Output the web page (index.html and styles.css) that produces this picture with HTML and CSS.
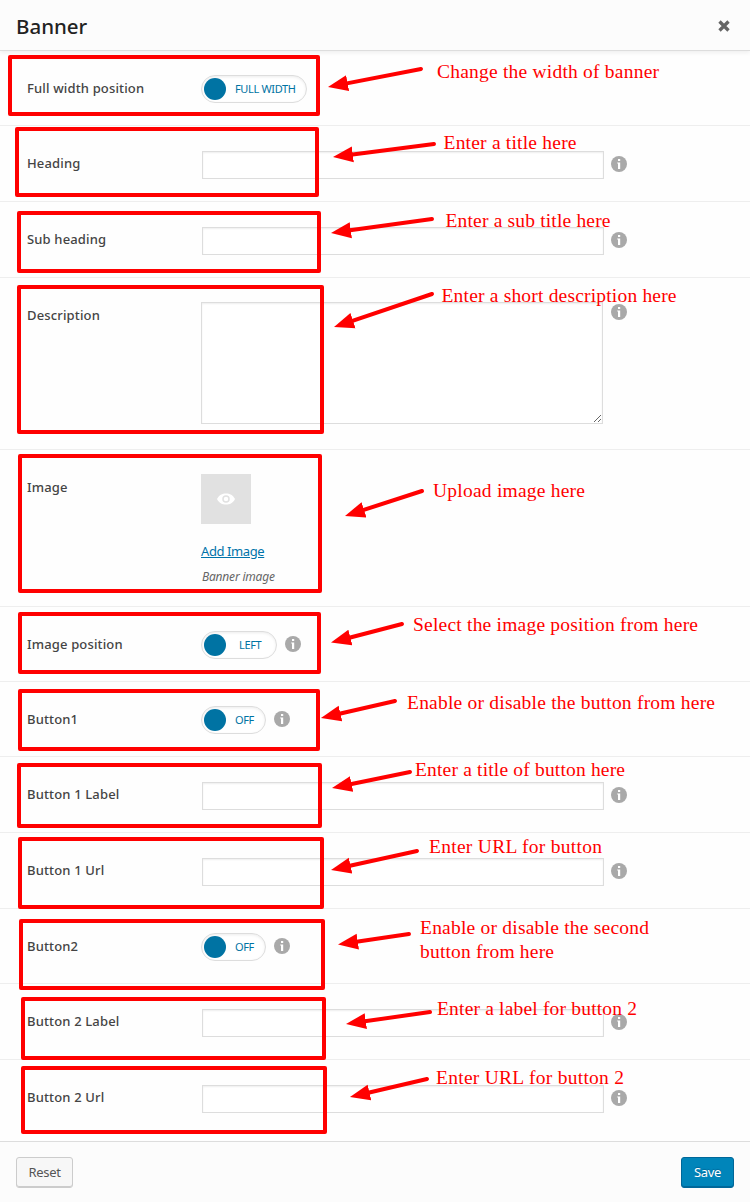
FILE: index.html
```html
<!DOCTYPE html>
<html lang="en">
<head>
<meta charset="utf-8">
<title>Banner</title>
<link rel="stylesheet" href="styles.css">
</head>
<body>
<svg class="defs" width="0" height="0">
  <symbol id="info" viewBox="0 0 16 16"><circle cx="8" cy="8" r="8" fill="#a9a9a9"/><path d="M7 3h2.200v2H7zM6.200 6.400h3V13H7V7.600h-.8z" fill="#fff"/></symbol>
</svg>
<main class="modal">
  <header class="header">
    <h1 class="title">Banner</h1>
    <svg class="close" viewBox="0 0 12 12"><path d="M1.500 1.500l9 9M10.500 1.500l-9 9" stroke="#666" stroke-width="3.300"/></svg>
  </header>
  <section class="rows">
    <div class="row"><span class="label">Full width position</span><div class="control"><span class="switch wide"><i class="knob"></i><span class="state">FULL WIDTH</span></span></div></div>
    <div class="row text"><span class="label">Heading</span><div class="control"><input class="field" type="text"><svg class="info"><use href="#info"/></svg></div></div>
    <div class="row text"><span class="label">Sub heading</span><div class="control"><input class="field" type="text"><svg class="info"><use href="#info"/></svg></div></div>
    <div class="row area"><span class="label">Description</span><div class="control"><textarea class="box"></textarea><svg class="info"><use href="#info"/></svg></div></div>
    <div class="row image"><span class="label">Image</span><div class="control upload">
      <div class="thumb"><svg class="eye" viewBox="0 0 18 12"><path d="M0 6C2 2 5.200.4 9 .4S16 2 18 6c-2 4-5.200 5.600-9 5.600S2 10 0 6z" fill="#fff"/><circle cx="9" cy="6" r="3" fill="none" stroke="#e1e1e1" stroke-width="1.500"/></svg></div>
      <a class="add">Add Image</a>
      <em class="hint">Banner image</em>
    </div></div>
    <div class="row"><span class="label">Image position</span><div class="control"><span class="switch mid"><i class="knob"></i><span class="state">LEFT</span></span><svg class="info"><use href="#info"/></svg></div></div>
    <div class="row"><span class="label">Button1</span><div class="control"><span class="switch"><i class="knob"></i><span class="state">OFF</span></span><svg class="info"><use href="#info"/></svg></div></div>
    <div class="row text"><span class="label">Button 1 Label</span><div class="control"><input class="field" type="text"><svg class="info"><use href="#info"/></svg></div></div>
    <div class="row text"><span class="label">Button 1 Url</span><div class="control"><input class="field" type="text"><svg class="info"><use href="#info"/></svg></div></div>
    <div class="row"><span class="label">Button2</span><div class="control"><span class="switch"><i class="knob"></i><span class="state">OFF</span></span><svg class="info"><use href="#info"/></svg></div></div>
    <div class="row text"><span class="label">Button 2 Label</span><div class="control"><input class="field" type="text"><svg class="info"><use href="#info"/></svg></div></div>
    <div class="row text last"><span class="label">Button 2 Url</span><div class="control"><input class="field" type="text"><svg class="info"><use href="#info"/></svg></div></div>
  </section>
  <footer class="footer">
    <button class="btn reset">Reset</button>
    <button class="btn save">Save</button>
  </footer>
  <svg class="notes" viewBox="0 0 750 1202">
    <defs><marker id="head" markerUnits="userSpaceOnUse" markerWidth="20" markerHeight="17" refX="10" refY="8.500" orient="auto"><path d="M0 .5L20 8.500 0 16.500z" fill="#f00"/></marker></defs>
    <g class="frames">
      <rect x="10" y="57" width="308" height="57"/>
      <rect x="17" y="129" width="300" height="66"/>
      <rect x="19" y="213" width="300" height="58"/>
      <rect x="19" y="287" width="303" height="145"/>
      <rect x="20" y="456" width="300" height="135"/>
      <rect x="20" y="614" width="299" height="58"/>
      <rect x="20" y="691" width="298" height="58"/>
      <rect x="19" y="765" width="301" height="61"/>
      <rect x="20" y="839" width="302" height="68"/>
      <rect x="21" y="921" width="302" height="67"/>
      <rect x="23" y="999" width="301" height="59"/>
      <rect x="23" y="1068" width="302" height="64"/>
    </g>
    <g class="arrows">
      <path d="M421 69L337.800 85.100"/>
      <path d="M434 144L342.900 155.700"/>
      <path d="M432 219L340.900 231.600"/>
      <path d="M432 294L343.500 323.800"/>
      <path d="M422 491L354.500 512.900"/>
      <path d="M402 624L340.700 640"/>
      <path d="M395 701L330.700 715.800"/>
      <path d="M410 772L341.800 786"/>
      <path d="M417 851L340.800 867.800"/>
      <path d="M409 934L347.900 943"/>
      <path d="M430 1012L355.900 1022.600"/>
      <path d="M427 1079L359.700 1094.700"/>
    </g>
    <g class="captions">
      <text x="437" y="78" textLength="222">Change the width of banner</text>
      <text x="443.500" y="149" textLength="133">Enter a title here</text>
      <text x="445.500" y="227" textLength="165">Enter a sub title here</text>
      <text x="441.500" y="302" textLength="235">Enter a short description here</text>
      <text x="433" y="497" textLength="152">Upload image here</text>
      <text x="413" y="631" textLength="285">Select the image position from here</text>
      <text x="407" y="709" textLength="308">Enable or disable the button from here</text>
      <text x="415" y="776" textLength="210">Enter a title of button here</text>
      <text x="429" y="853" textLength="173">Enter URL for button</text>
      <text x="420" y="934" textLength="229">Enable or disable the second</text>
      <text x="420" y="958" textLength="134">button from here</text>
      <text x="437" y="1015" textLength="200">Enter a label for button 2</text>
      <text x="436" y="1084" textLength="188">Enter URL for button 2</text>
    </g>
  </svg>
</main>
</body>
</html>
```

FILE: styles.css
```css
* { box-sizing: border-box; }
body { margin: 0; background: #fff; font: 13px/20px "Noto Sans", "Open Sans", sans-serif; color: #444; }
.defs { position: absolute; }
.modal { position: relative; width: 750px; height: 1202px; display: flex; flex-direction: column; background: #fefefe; }
.header { height: 51px; flex: none; display: flex; align-items: center; justify-content: space-between; padding: 2px 20px 0 16px; background: #fcfcfc; border-bottom: 1px solid #ddd; box-shadow: 0 2px 4px rgba(0,0,0,.06); }
.title { margin: 0; font-size: 20.500px; line-height: 30px; font-weight: 500; color: #222; }
.close { width: 12px; height: 12px; }
.rows { flex: none; }
.row { display: grid; grid-template-columns: 174px 1fr; height: 75px; padding: 24px 0 0 27px; border-bottom: 1px solid #eee; }
.text { height: 76px; }
.area { height: 172px; }
.image { height: 157px; }
.last { height: 81px; border-bottom: 0; }
.label { padding-top: 3px; font-weight: 500; font-size: 13px; letter-spacing: .15px; }
.control { display: flex; align-items: flex-start; gap: 8px; }
.field { width: 402px; height: 28px; margin: 1px -1px 0 1px; border: 1px solid #ddd; background: #fff; box-shadow: inset 0 1px 2px rgba(0,0,0,.07); }
.box { width: 402px; height: 122px; margin: 0; border: 1px solid #ddd; background: #fff; box-shadow: inset 0 1px 2px rgba(0,0,0,.07); resize: both; }
.info { width: 16px; height: 16px; flex: none; margin-top: 5px; }
.text .info { margin-top: 6px; }
.area .info { margin-top: 2px; }
.switch { display: flex; align-items: center; width: 65px; height: 28px; padding-left: 2px; border: 1px solid #ddd; border-radius: 14px; background: #fff; box-shadow: inset 0 1px 3px rgba(0,0,0,.08); }
.wide { width: 106px; }
.mid { width: 76px; }
.knob { width: 22px; height: 22px; flex: none; border-radius: 50%; background: #0073a3; }
.state { margin-left: 9px; font-size: 11px; line-height: 22px; letter-spacing: -.35px; color: #0073a3; white-space: nowrap; }
.mid .state { margin-left: 13px; }
.upload { flex-direction: column; gap: 0; }
.thumb { display: flex; align-items: center; justify-content: center; width: 50px; height: 50px; background: #e1e1e1; }
.eye { width: 18px; height: 12px; }
.add { margin-top: 17px; letter-spacing: -.4px; color: #0073aa; text-decoration: underline; }
.hint { margin: 7px 0 0 1px; font-size: 12px; line-height: 18px; letter-spacing: -.2px; color: #666; }
.footer { height: 61px; flex: none; display: flex; align-items: flex-start; justify-content: space-between; padding: 15px 16px 0; background: #fcfcfc; border-top: 1px solid #ddd; }
.btn { height: 31px; padding: 0; border-radius: 3px; font: 13px/27px "Noto Sans", sans-serif; letter-spacing: -.3px; }
.reset { width: 57px; color: #555; background: #f7f7f7; border: 1px solid #ccc; box-shadow: inset 0 -1px 0 #ccc; }
.save { width: 53px; color: #fff; background: #0085ba; border: 1px solid #006799; box-shadow: inset 0 -1px 0 #006799; text-shadow: 0 -1px 1px #006799; }
.notes { position: absolute; left: 0; top: 0; width: 750px; height: 1202px; pointer-events: none; }
.frames { fill: none; stroke: #f00; stroke-width: 4; stroke-linejoin: round; }
.arrows { fill: none; stroke: #f00; stroke-width: 4; stroke-linecap: round; }
.arrows path { marker-end: url(#head); }
.captions { fill: #f00; font: 19.500px "Liberation Serif", serif; }
```
